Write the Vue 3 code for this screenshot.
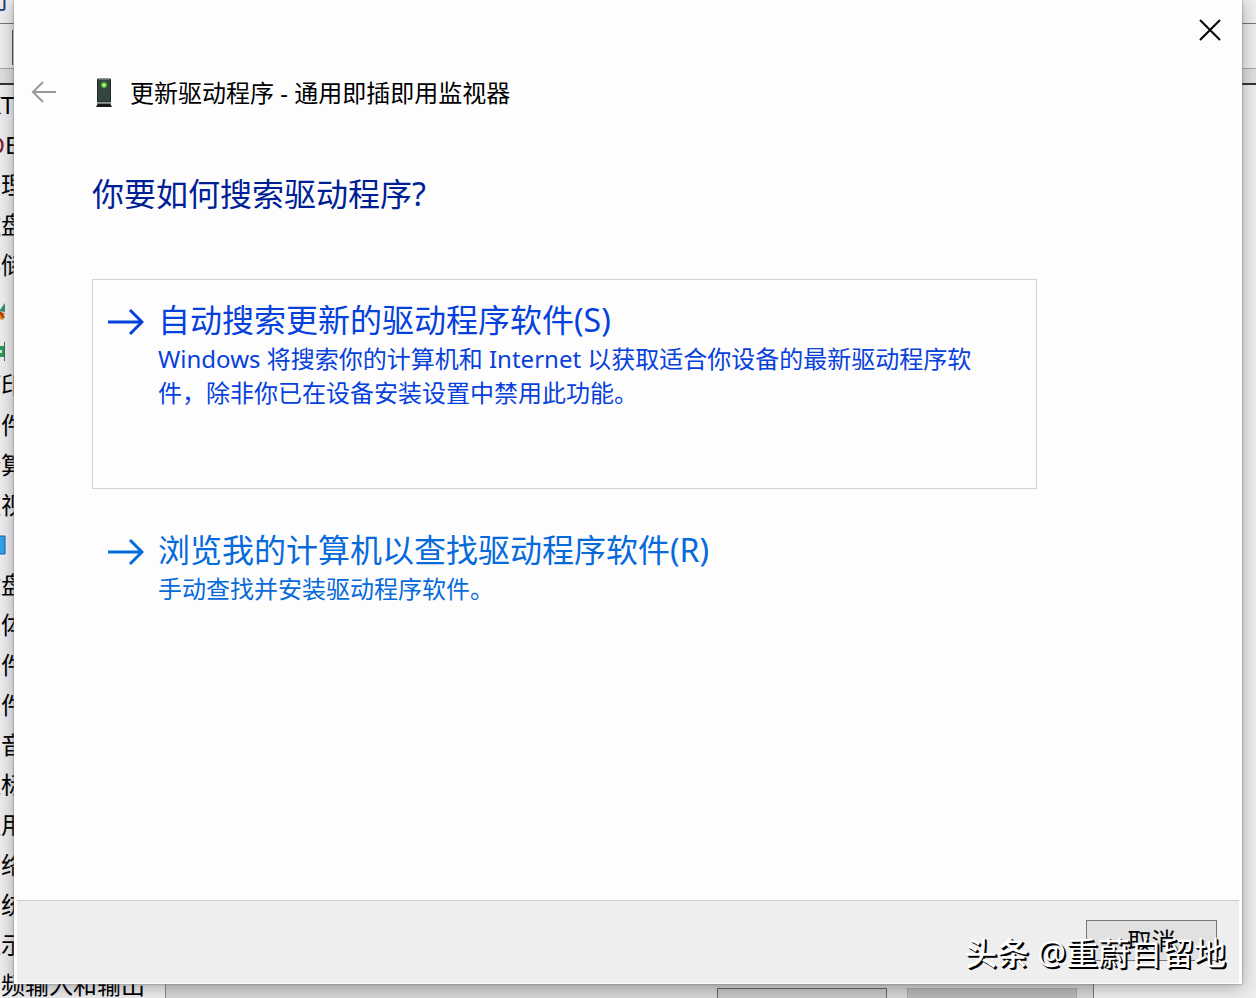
<script setup>
const rows = [
  { lead: 'K', text: 'T' },
  { lead: 'D', text: 'E', wide: true },
  { lead: '处', text: '理' },
  { lead: '磁', text: '盘' },
  { lead: '存', text: '储' },
  { icon: 'chip' },
  { icon: 'card' },
  { lead: '打', text: '印' },
  { lead: '固', text: '件', edge: true },
  { lead: '计', text: '算' },
  { lead: '监', text: '视' },
  { icon: 'screen' },
  { lead: '键', text: '盘' },
  { lead: '人', text: '体' },
  { lead: '软', text: '件' },
  { lead: '软', text: '件' },
  { lead: '声', text: '音' },
  { lead: '鼠', text: '标' },
  { lead: '通', text: '用' },
  { lead: '网', text: '络' },
  { lead: '系', text: '统' },
  { lead: '显', text: '示' },
  { lead: '音', text: '频输入和输出' },
]

const choices = [
  {
    title: '自动搜索更新的驱动程序软件(S)',
    text: 'Windows 将搜索你的计算机和 Internet 以获取适合你设备的最新驱动程序软件，除非你已在设备安装设置中禁用此功能。',
    focused: true,
  },
  {
    title: '浏览我的计算机以查找驱动程序软件(R)',
    text: '手动查找并安装驱动程序软件。',
    focused: false,
  },
]
</script>

<template>
  <div class="desktop">
    <div class="manager" aria-hidden="true">
      <div class="menubar"><span>行</span></div>
      <div class="toolbar"><i></i></div>
      <div class="band"></div>
      <ul class="tree">
        <li v-for="(row, i) in rows" :key="i">
          <template v-if="row.text">
            <span class="lead" :class="{ edge: row.edge, wide: row.wide }">{{ row.lead }}</span><span>{{ row.text }}</span>
          </template>
          <svg v-else-if="row.icon === 'chip'" width="30" height="36" viewBox="0 0 30 36">
            <path d="M22 24l6-8v9z" fill="#2f8f72" />
            <path d="M20 24l8 2-2 7-6-2z" fill="#e8871e" />
            <path d="M23 25l4 6" stroke="#9c3a10" stroke-width="2" />
          </svg>
          <svg v-else-if="row.icon === 'card'" width="30" height="36" viewBox="0 0 30 36">
            <path d="M20 19h7v11h-7z" fill="#2a9a58" />
            <path d="M23 23h2v3h-2z" fill="#d8f2e0" />
            <path d="M27.500 15v19" stroke="#4c6558" />
          </svg>
          <svg v-else width="30" height="24" viewBox="0 0 30 24">
            <path d="M10 3h18v18H10z" fill="#2da4ee" stroke="#1c5f94" />
          </svg>
        </li>
      </ul>
      <div class="panel">
        <div class="slot dark"></div>
        <div class="slot"></div>
      </div>
    </div>

    <main class="dialog" role="dialog" aria-labelledby="caption">
      <div class="titlebar">
        <button class="close" type="button" aria-label="关闭">
          <svg width="24" height="24" viewBox="0 0 24 24"><path d="M2 2l20 20M22 2L2 22" stroke="#000" stroke-width="2" /></svg>
        </button>
      </div>
      <header class="caption">
        <button class="back" type="button" aria-label="返回">
          <svg width="26" height="24" viewBox="0 0 26 24"><path d="M25 11H3M12 1L2 11l10 10" fill="none" stroke="#999" stroke-width="2" /></svg>
        </button>
        <svg class="device" width="18" height="30" viewBox="0 0 18 30">
          <path d="M2.500 1h13v23h-13z" fill="#34443f" stroke="#202a28" />
          <path d="M3 1.500h12" stroke="#66736c" />
          <circle cx="9" cy="7" r="3" fill="#57b832" />
          <circle cx="9" cy="7" r="1.500" fill="#c9ff8a" />
          <path d="M3 25h12l2 4H1z" fill="#15191a" />
          <path d="M2 25.500h14" stroke="#75807c" />
        </svg>
        <span id="caption">更新驱动程序 - 通用即插即用监视器</span>
      </header>

      <section class="content">
        <h1>你要如何搜索驱动程序?</h1>
        <div class="choices">
          <button v-for="c in choices" :key="c.title" type="button" class="choice" :class="{ focused: c.focused }">
            <svg class="arrow" width="36" height="28" viewBox="0 0 36 28">
              <path d="M0 14h34M22 2l12 12-12 12" fill="none" stroke="currentColor" stroke-width="3" />
            </svg>
            <span class="words">
              <span class="title">{{ c.title }}</span>
              <span class="text">{{ c.text }}</span>
            </span>
          </button>
        </div>
      </section>

      <footer class="footer">
        <button class="cancel" type="button">取消</button>
      </footer>
    </main>

    <p class="watermark"><b>头条</b> @重蔚自留地</p>
  </div>
</template>

<style>
body {
  margin: 0;
  overflow: hidden;
}
</style>

<style scoped>
.desktop {
  position: relative;
  height: 100vh;
  overflow: hidden;
  font-family: "Noto Sans", "Noto Sans CJK SC", sans-serif;
  font-size: 24px;
  color: #000;
}
button {
  font: inherit;
  color: inherit;
  background: none;
  border: 0;
  padding: 0;
  margin: 0;
}
svg {
  display: block;
  flex: none;
}
.manager {
  display: flex;
  flex-direction: column;
  height: 100%;
  background: #ededf0;
}
.menubar {
  flex: none;
  height: 23px;
  border-bottom: 1px solid #777;
  overflow: hidden;
  color: #26357a;
}
.menubar span {
  display: block;
  margin: -13px 0 0 -14px;
  line-height: 24px;
}
.toolbar {
  flex: none;
  height: 45px;
  box-sizing: border-box;
  padding: 6px 0 3px 12px;
  border-bottom: 1px solid #aaa;
}
.toolbar i {
  display: block;
  height: 100%;
  border-left: 1px solid #555;
}
.band {
  flex: none;
  height: 14px;
  background: #dedede;
  border-bottom: 2px solid #333;
}
.tree {
  flex: 1;
  min-height: 0;
  width: 188px;
  margin: 0 0 0 -23px;
  padding: 0;
  list-style: none;
  overflow: hidden;
  border-right: 1px solid #888;
}
.tree li {
  display: flex;
  align-items: center;
  height: 40px;
  line-height: 40px;
  white-space: nowrap;
}
.lead {
  width: 24px;
  text-align: right;
}
.lead.wide {
  width: 28px;
  color: #7c1f35;
}
.lead.edge {
  color: #2b93b8;
}
.panel {
  position: absolute;
  left: 166px;
  right: 162px;
  bottom: 0;
  height: 14px;
  box-sizing: border-box;
  display: flex;
  justify-content: flex-end;
  gap: 20px;
  padding: 4px 16px 0 0;
  background: #d6d6d6;
  border-right: 1px solid #777;
}
.slot {
  width: 170px;
  background: #b8b8b8;
  border: 1px solid #aaa;
  border-bottom: 0;
  box-sizing: border-box;
}
.slot.dark {
  background: #c8c8c8;
  border-color: #666;
}
.dialog {
  position: absolute;
  inset: 0 14px 14px;
  display: flex;
  flex-direction: column;
  background: #fdfdfe;
  box-shadow: 0 0 2px #777, 0 3px 16px rgba(0, 0, 0, 0.3);
}
.titlebar {
  display: flex;
  justify-content: flex-end;
  padding: 18px 20px 0 0;
}
.caption {
  display: flex;
  align-items: center;
  margin-top: 30px;
  padding-left: 17px;
  height: 42px;
  line-height: 42px;
}
.device {
  margin: 0 17px 0 38px;
}
.content {
  flex: 1;
  padding: 56px 205px 0 78px;
}
h1 {
  margin: 0;
  font-size: 32px;
  line-height: 48px;
  font-weight: 400;
  color: #001f95;
}
.choices {
  display: flex;
  flex-direction: column;
  gap: 20px;
  margin-top: 61px;
}
.choice {
  display: flex;
  align-items: flex-start;
  gap: 14px;
  box-sizing: border-box;
  min-height: 210px;
  padding: 18px 34px 18px 15px;
  border: 1px solid transparent;
  text-align: left;
  color: #066ada;
}
.choice.focused {
  border-color: #d2d2d6;
  color: #0741dc;
}
.arrow {
  margin-top: 10px;
}
.title,
.text {
  display: block;
}
.title {
  font-size: 32px;
  line-height: 44px;
}
.text {
  line-height: 34px;
}
.footer {
  display: flex;
  justify-content: flex-end;
  align-items: flex-start;
  box-sizing: border-box;
  height: 83px;
  margin: 0 3px 1px;
  padding: 19px 22px 0 0;
  background: #eeeeef;
  border-top: 1px solid #cdcdcd;
}
.cancel {
  box-sizing: border-box;
  width: 131px;
  height: 41px;
  line-height: 36px;
  background: #e1e1e2;
  border: 1px solid #777;
}
.watermark {
  position: absolute;
  right: 30px;
  bottom: 21px;
  margin: 0;
  font-size: 32px;
  line-height: 48px;
  color: #fff;
  text-shadow: 1px 1px 0 #000, 2px 2px 0 #000;
}
.watermark b {
  font-weight: 500;
}
</style>
